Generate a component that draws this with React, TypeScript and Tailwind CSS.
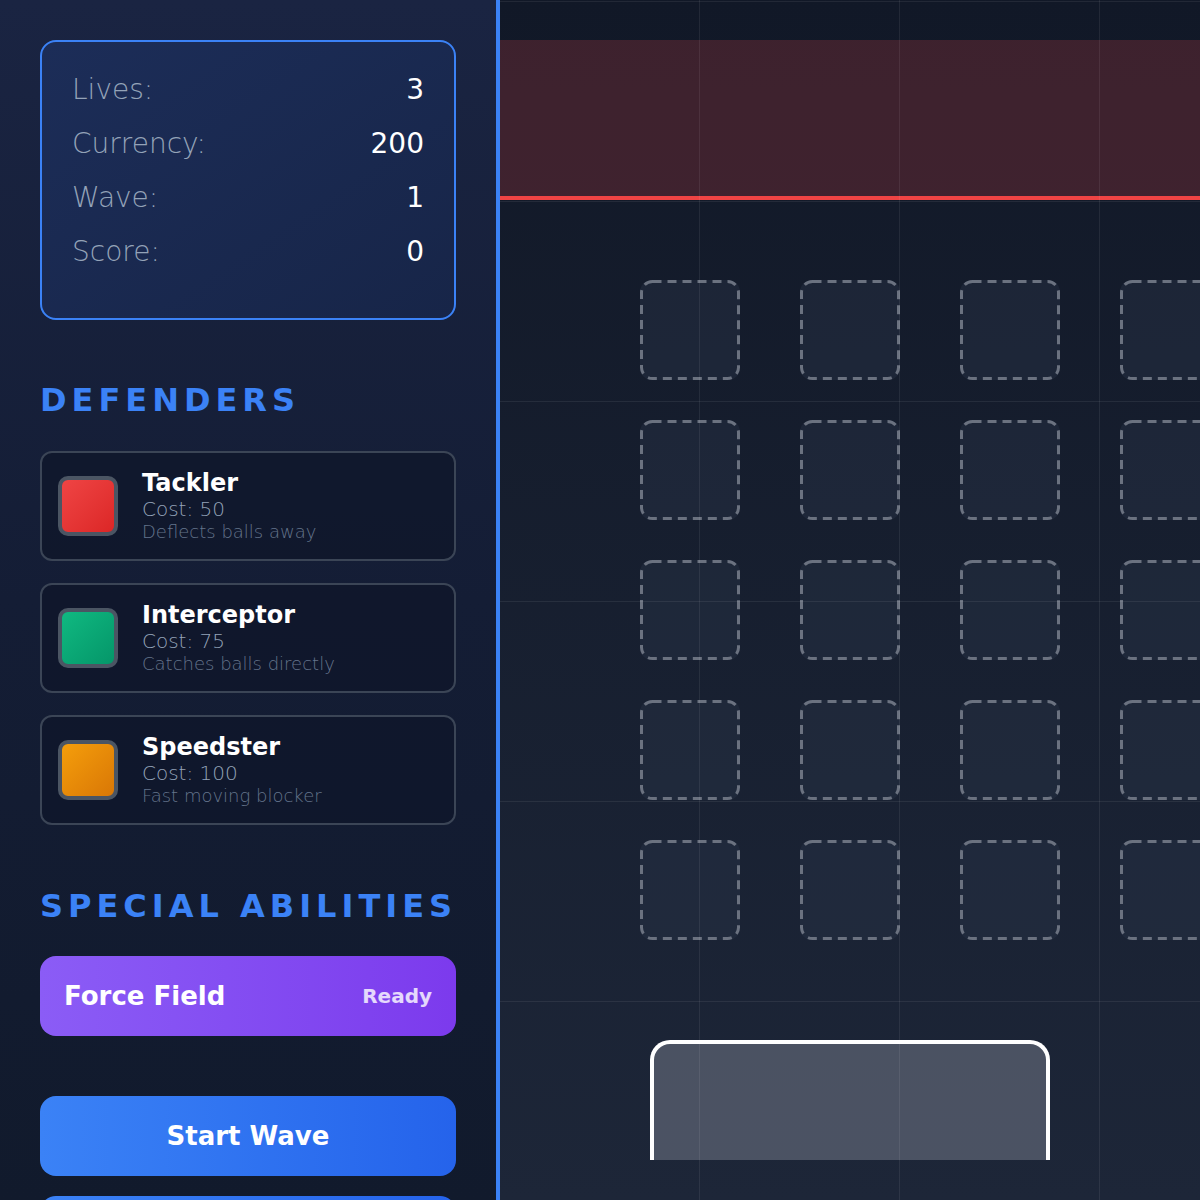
const stats = [
  { label: "Lives:", value: "3" },
  { label: "Currency:", value: "200" },
  { label: "Wave:", value: "1" },
  { label: "Score:", value: "0" },
];

const defenders = [
  { name: "Tackler", cost: 50, desc: "Deflects balls away", swatch: "from-[#ef4444] to-[#dc2626]" },
  { name: "Interceptor", cost: 75, desc: "Catches balls directly", swatch: "from-[#10b981] to-[#059669]" },
  { name: "Speedster", cost: 100, desc: "Fast moving blocker", swatch: "from-[#f59e0b] to-[#d97706]" },
];

const slotRows = [0, 1, 2, 3, 4];
const slotCols = [0, 1, 2, 3];
const vLines = [199, 399, 599];
const hLines = [1, 201, 401, 601, 801, 1001];

function Slot() {
  return (
    <div className="relative h-[100px] w-[100px] rounded-xl bg-[#283348]/45">
      <svg className="absolute inset-0" width="100" height="100" viewBox="0 0 100 100">
        <rect
          x="1.5"
          y="1.5"
          width="97"
          height="97"
          rx="11"
          fill="none"
          stroke="#6b7280"
          strokeWidth="3"
          strokeDasharray="9 6"
        />
      </svg>
    </div>
  );
}

function Sidebar() {
  return (
    <aside className="w-[500px] shrink-0 border-r-4 border-[#3b82f6] bg-gradient-to-b from-[#1a2442] via-[#141d35] to-[#111a2c] px-10 pt-10">
      <div className="rounded-2xl border-2 border-[#3b82f6] bg-gradient-to-br from-[#1c2d58] to-[#172548] px-[30px] pt-[30px] pb-[30px]">
        {stats.map((s) => (
          <div key={s.label} className="mb-[18px] flex h-9 items-center justify-between text-[28px]">
            <span className="font-light text-[#94a3b8]">{s.label}</span>
            <span className="text-white">{s.value}</span>
          </div>
        ))}
      </div>

      <h2 className="mt-[60px] h-10 whitespace-nowrap text-[32px] font-bold leading-10 tracking-[5px] text-[#3b82f6]">
        DEFENDERS
      </h2>

      <div className="mt-[31px] flex flex-col gap-[22px]">
        {defenders.map((d) => (
          <div
            key={d.name}
            className="flex h-[110px] items-center gap-6 rounded-xl border-2 border-[#3b4556] bg-[#0f172a]/80 px-4"
          >
            <div className={`h-[60px] w-[60px] rounded-[10px] border-4 border-[#4b5563] bg-gradient-to-br ${d.swatch}`} />
            <div className="flex flex-col">
              <span className="text-[24px] font-bold leading-7 text-white">{d.name}</span>
              <span className="text-[20px] font-light leading-6 text-[#94a3b8]">Cost: {d.cost}</span>
              <span className="text-[18px] font-light leading-[22px] text-[#64748b]">{d.desc}</span>
            </div>
          </div>
        ))}
      </div>

      <h2 className="mt-[61px] h-10 whitespace-nowrap text-[32px] font-bold leading-10 tracking-[5px] text-[#3b82f6]">
        SPECIAL ABILITIES
      </h2>

      <button className="mt-[30px] flex h-20 w-full items-center justify-between rounded-2xl bg-gradient-to-r from-[#8b5cf6] to-[#7c3aed] px-6 text-white">
        <span className="text-[26px] font-bold">Force Field</span>
        <span className="text-[20px] font-semibold text-white/80">Ready</span>
      </button>

      <button className="mt-[60px] flex h-20 w-full items-center justify-center rounded-2xl bg-gradient-to-r from-[#3b82f6] to-[#2563eb] text-[26px] font-bold text-white">
        Start Wave
      </button>

      <button className="mt-5 flex h-20 w-full items-center justify-center rounded-2xl bg-gradient-to-r from-[#3b82f6] to-[#2563eb] text-[26px] font-bold text-white">
        Pause
      </button>
    </aside>
  );
}

function Field() {
  return (
    <main className="relative flex-1 overflow-hidden bg-gradient-to-b from-[#111827] to-[#1d2638]">
      {/* danger zone at the top */}
      <div className="mt-10 h-[160px] border-b-4 border-[#ef4444] bg-[#ef4444]/20" />

      {/* placement slots */}
      <div className="ml-[140px] mt-20 grid grid-cols-[repeat(4,100px)] gap-x-[60px] gap-y-10">
        {slotRows.map((r) => slotCols.map((c) => <Slot key={`${r}-${c}`} />))}
      </div>

      {/* goal */}
      <div className="ml-[150px] mt-[100px] h-[120px] w-[400px] rounded-t-[20px] border-x-4 border-t-4 border-white bg-[#6b7280]/60" />

      {/* grid overlay */}
      {vLines.map((x) => (
        <div key={`v${x}`} className="pointer-events-none absolute top-0 bottom-0 w-px bg-white/[0.07]" style={{ left: x }} />
      ))}
      {hLines.map((y) => (
        <div key={`h${y}`} className="pointer-events-none absolute left-0 right-0 h-px bg-white/[0.07]" style={{ top: y }} />
      ))}
    </main>
  );
}

export default function App() {
  return (
    <div
      className="flex h-[1200px] w-[1200px] overflow-hidden bg-[#111827]"
      style={{ fontFamily: '"DejaVu Sans", "Liberation Sans", sans-serif' }}
    >
      <Sidebar />
      <Field />
    </div>
  );
}
